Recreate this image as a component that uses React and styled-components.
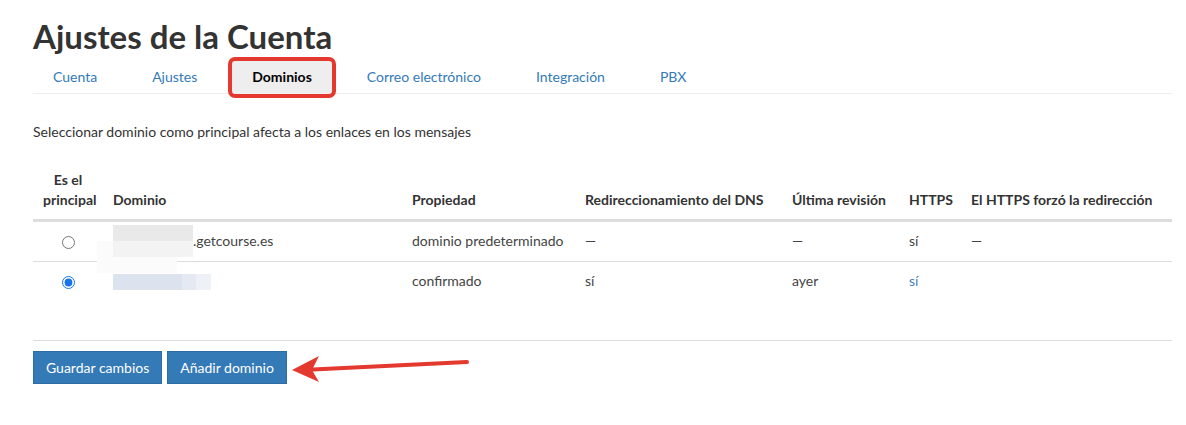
import React, { useState } from "react";
import styled, { createGlobalStyle } from "styled-components";

const GlobalStyle = createGlobalStyle`
  body {
    margin: 0;
    background: #ffffff;
    font-family: Lato, "Open Sans", sans-serif;
    color: #333333;
  }
`;

const tabs = ["Cuenta", "Ajustes", "Dominios", "Correo electrónico", "Integración", "PBX"];

const columns = [
  { title: "Es el principal", width: 70, center: true },
  { title: "Dominio", width: 299 },
  { title: "Propiedad", width: 173 },
  { title: "Redireccionamiento del DNS", width: 207 },
  { title: "Última revisión", width: 117 },
  { title: "HTTPS", width: 62 },
  { title: "El HTTPS forzó la redirección", width: 211 },
];

function App() {
  const [primary, setPrimary] = useState(1);

  return (
    <Page>
      <GlobalStyle />
      <Title>Ajustes de la Cuenta</Title>
      <Tabs>
        {tabs.map((tab) => (
          <Tab key={tab} active={tab === "Dominios"}>
            {tab}
            {tab === "Dominios" && <Highlight />}
          </Tab>
        ))}
      </Tabs>

      <Hint>Seleccionar dominio como principal afecta a los enlaces en los mensajes</Hint>

      <Table>
        <colgroup>
          {columns.map((c) => (
            <col key={c.title} style={{ width: c.width }} />
          ))}
        </colgroup>
        <thead>
          <tr>
            {columns.map((c) => (
              <Th key={c.title} center={c.center}>
                {c.title === "Es el principal" ? (
                  <>
                    Es el
                    <br />
                    principal
                  </>
                ) : (
                  c.title
                )}
              </Th>
            ))}
          </tr>
        </thead>
        <tbody>
          <Row>
            <Td center>
              <Radio type="radio" checked={primary === 0} onChange={() => setPrimary(0)} />
            </Td>
            <Td>
              <Blurred>
                <BlurGray />
                .getcourse.es
              </Blurred>
            </Td>
            <Td>dominio predeterminado</Td>
            <Td>—</Td>
            <Td>—</Td>
            <Td>sí</Td>
            <Td>—</Td>
          </Row>
          <Row>
            <Td center>
              <Radio type="radio" checked={primary === 1} onChange={() => setPrimary(1)} />
            </Td>
            <Td>
              <BlurBlue />
            </Td>
            <Td>confirmado</Td>
            <Td>sí</Td>
            <Td>ayer</Td>
            <Td link>sí</Td>
            <Td />
          </Row>
        </tbody>
      </Table>

      <Footer>
        <Button>Guardar cambios</Button>
        <ButtonWrap>
          <Button>Añadir dominio</Button>
          <Arrow width="182" height="30" viewBox="0 0 182 30">
            <path d="M176 8 L22 15.5" stroke="#e3392f" strokeWidth="4" strokeLinecap="round" fill="none" />
            <path d="M1 16 L28 2 L21 16 L28 28 Z" fill="#e3392f" />
          </Arrow>
        </ButtonWrap>
      </Footer>
    </Page>
  );
}

const Page = styled.div`
  padding: 14px 14px 40px 33px;
`;

const Title = styled.h1`
  margin: 0;
  font-size: 33px;
  line-height: 44px;
  font-weight: 700;
  color: #333333;
`;

const Tabs = styled.ul`
  display: flex;
  list-style: none;
  margin: 2px 0 0;
  padding: 0;
  border-bottom: 1px solid #eeeeee;
`;

const Tab = styled.li`
  position: relative;
  margin: 0 15px -1px 0;
  padding: 0 20px;
  height: 34px;
  line-height: 34px;
  font-size: 14px;
  color: ${(p) => (p.active ? "#000000" : "#337ab7")};
  font-weight: ${(p) => (p.active ? 700 : 400)};
  background: ${(p) => (p.active ? "#eeeeee" : "transparent")};
  border-radius: 3px 3px 0 0;
`;

const Highlight = styled.span`
  position: absolute;
  left: -4px;
  right: -4px;
  top: -3px;
  bottom: -4px;
  border: 4px solid #e3392f;
  border-radius: 7px;
`;

const Hint = styled.p`
  margin: 28px 0 0;
  font-size: 14px;
  line-height: 20px;
  color: #333333;
`;

const Table = styled.table`
  width: 1139px;
  margin-top: 18px;
  table-layout: fixed;
  border-collapse: collapse;
  font-size: 14px;
`;

const Th = styled.th`
  padding: 10px 10px 9px;
  text-align: ${(p) => (p.center ? "center" : "left")};
  vertical-align: bottom;
  line-height: 20px;
  font-weight: 700;
  color: #333333;
  border-bottom: 3px solid #dddddd;
  white-space: nowrap;
`;

const Row = styled.tr`
  & + & td {
    border-top: 1px solid #dddddd;
  }
`;

const Td = styled.td`
  padding: 9px 10px 10px;
  height: 20px;
  line-height: 20px;
  text-align: ${(p) => (p.center ? "center" : "left")};
  vertical-align: middle;
  color: ${(p) => (p.link ? "#4a7fbf" : "#444444")};
`;

const Radio = styled.input`
  margin: 0;
  width: 13px;
  height: 13px;
  accent-color: #1a73e8;
  vertical-align: middle;
`;

const Blurred = styled.span`
  position: relative;
  display: inline-block;
  padding-left: 80px;
`;

const BlurGray = styled.span`
  position: absolute;
  left: 0;
  top: -6px;
  width: 80px;
  height: 32px;
  background: linear-gradient(#e9e9e9 0 50%, #f3f3f3 50% 100%);
  box-shadow: -16px 16px 0 0 #fbfbfb;
`;

const BlurBlue = styled.span`
  display: inline-block;
  width: 98px;
  height: 16px;
  vertical-align: middle;
  background: linear-gradient(90deg, #dde3ee 0 70%, #e5e9f1 70% 85%, #eef1f6 85% 100%);
`;

const Footer = styled.div`
  display: flex;
  gap: 5px;
  margin-top: 39px;
  padding-top: 10px;
  border-top: 1px solid #dddddd;
`;

const ButtonWrap = styled.div`
  position: relative;
`;

const Button = styled.button`
  height: 33px;
  padding: 0 12px;
  font-family: inherit;
  font-size: 14px;
  color: #ffffff;
  background: #337ab7;
  border: 1px solid #2e6da4;
  border-radius: 0;
`;

const Arrow = styled.svg`
  position: absolute;
  left: calc(100% + 4px);
  top: 3px;
`;

export default App;
